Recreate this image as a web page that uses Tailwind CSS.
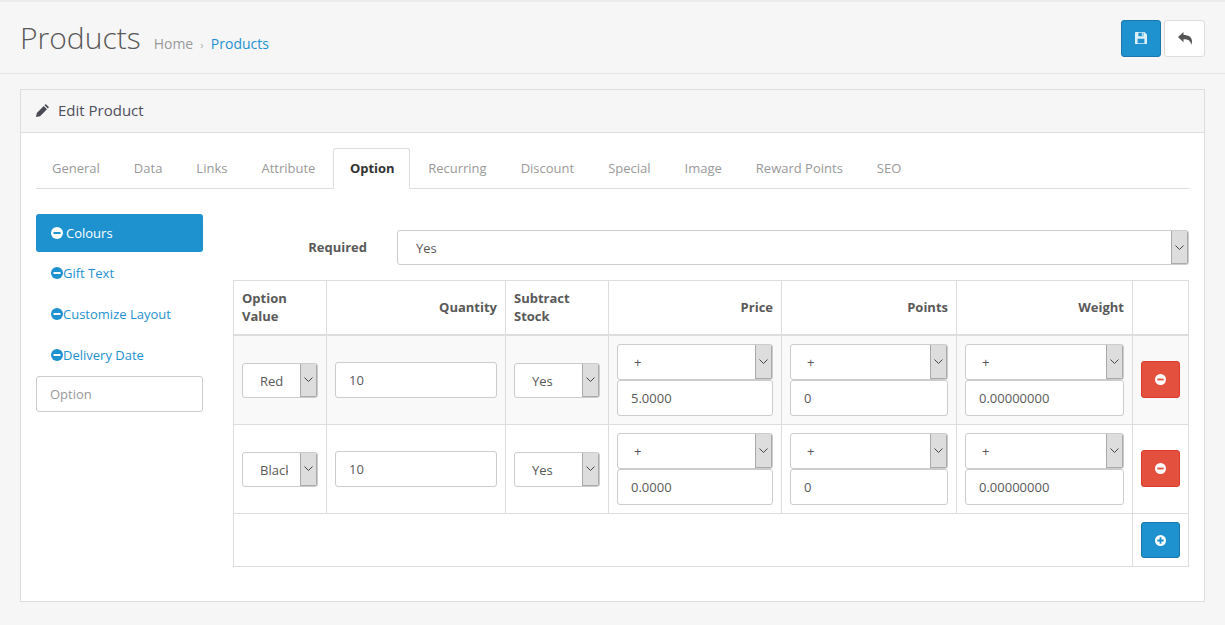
<!DOCTYPE html>
<html lang="en">
<head>
  <meta charset="UTF-8" />
  <title>Products</title>
  <script src="https://cdn.jsdelivr.net/npm/@tailwindcss/browser@4"></script>
</head>
<body class="bg-[#f6f6f6] font-['Open_Sans',sans-serif] text-[13px] leading-[18px] text-[#595959]">
  <div class="border-t-2 border-[#ececec]">
    <!-- page header -->
    <div class="h-[72px] border-b border-[#e3e3e3] flex items-center justify-between pl-5 pr-5">
      <div class="flex items-baseline">
        <h1 class="text-[30px] leading-[36px] font-light text-[#595959]">Products</h1>
        <div class="ml-[13px] text-[14px] text-[#999]">Home <span class="text-[11px] mx-[3.500px] text-[#aaa]">›</span> <a class="text-[#1e91cf]">Products</a></div>
      </div>
      <div class="flex gap-[3px] mt-[1px]">
        <button class="w-10 h-[37px] rounded-[3px] bg-[#1e91cf] border border-[#1978ab] flex items-center justify-center">
          <svg width="12" height="12" viewBox="0 0 14 14"><path fill="#fff" fill-opacity=".85" fill-rule="evenodd" d="M1 0H11L14 3V13a1 1 0 0 1-1 1H1a1 1 0 0 1-1-1V1a1 1 0 0 1 1-1zM4 1V5H10V1zM8 1.500H9.500V4.500H8zM3 8V13H11V8z"/></svg>
        </button>
        <button class="w-[41px] h-[37px] rounded-[3px] bg-white border border-[#ddd] flex items-center justify-center">
          <svg width="14" height="13" viewBox="0 0 14 13"><path fill="#555" d="M0 5L5.500 0V3C10.500 3 14 5 14 9.500C14 11 13.500 12 13 13C13 9 10.500 7.300 5.500 7.300V10.300Z"/></svg>
        </button>
      </div>
    </div>

    <div class="px-5 pt-[15px]">
      <div class="border border-[#ddd] bg-white h-[513px]">
        <div class="h-[43px] pb-[2px] bg-[#f6f6f6] border-b border-[#ddd] flex items-center pl-[15px] text-[15px] text-[#4f4f5c]">
          <svg class="mr-[9px]" width="13" height="13" viewBox="0 0 16 16"><path fill="#4a4a55" d="M12 0L16 4L14.500 5.500L10.500 1.500zM9.500 2.500L13.500 6.500L5 15L0 16L1 11z"/></svg>
          Edit Product
        </div>
        <div class="px-[15px] pt-[15px]">
          <!-- tabs -->
          <div class="flex h-[41px] border-b border-[#ddd] text-[#999] gap-[2px]">
            <a class="px-4 pt-[11px]">General</a>
            <a class="px-4 pt-[11px]">Data</a>
            <a class="px-4 pt-[11px]">Links</a>
            <a class="px-4 pt-[11px]">Attribute</a>
            <a class="pl-[15.500px] pr-[14.500px] pt-[10px] h-[41px] bg-white border border-[#ddd] border-b-white rounded-t-[3px] font-bold text-[#333]">Option</a>
            <a class="px-4 pt-[11px]">Recurring</a>
            <a class="px-4 pt-[11px]">Discount</a>
            <a class="px-4 pt-[11px]">Special</a>
            <a class="px-4 pt-[11px]">Image</a>
            <a class="px-4 pt-[11px]">Reward Points</a>
            <a class="px-4 pt-[11px]">SEO</a>
          </div>

          <div class="flex mt-[25px]">
            <!-- option list -->
            <div class="w-[167px] mr-[30px] shrink-0">
              <div class="h-[38px] rounded-[3px] bg-[#1e91cf] text-white flex items-center pl-[15px]">
                <svg class="mr-[3px]" width="12" height="12" viewBox="0 0 12 12"><circle cx="6" cy="6" r="6" fill="#fff"/><rect x="2.500" y="5" width="7" height="2" fill="#1e91cf"/></svg>
                Colours
              </div>
              <div class="h-[41px] text-[#1e91cf] flex items-center pl-[15px]">
                <svg width="12" height="12" viewBox="0 0 12 12"><circle cx="6" cy="6" r="6" fill="#1e91cf"/><rect x="2.500" y="5" width="7" height="2" fill="#fff"/></svg>
                Gift Text
              </div>
              <div class="h-[41px] text-[#1e91cf] flex items-center pl-[15px]">
                <svg width="12" height="12" viewBox="0 0 12 12"><circle cx="6" cy="6" r="6" fill="#1e91cf"/><rect x="2.500" y="5" width="7" height="2" fill="#fff"/></svg>
                Customize Layout
              </div>
              <div class="h-[41px] text-[#1e91cf] flex items-center pl-[15px]">
                <svg width="12" height="12" viewBox="0 0 12 12"><circle cx="6" cy="6" r="6" fill="#1e91cf"/><rect x="2.500" y="5" width="7" height="2" fill="#fff"/></svg>
                Delivery Date
              </div>
              <div class="h-[36px] mt-[1px] border border-[#ccc] rounded-[3px] flex items-center pl-[13px] text-[#999]">Option</div>
            </div>

            <!-- option detail -->
            <div class="w-[956px] pt-[16px]">
              <div class="flex items-center h-[35px] mb-[15px]">
                <label class="w-[134px] text-right font-bold mb-[2px]">Required</label>
                <div class="ml-[30px] flex-1 h-[35px] border border-[#ccc] rounded-[3px] flex items-center justify-between pl-[18px] overflow-hidden">
                  Yes
                  <span class="w-[17px] h-full bg-[#ddd] border-l border-r border-b border-[#aaa] flex items-center justify-center">
                    <svg width="9" height="5" viewBox="0 0 9 5"><path d="M.5.500L4.500 4.500L8.500.500" fill="none" stroke="#444"/></svg>
                  </span>
                </div>
              </div>

              <table class="w-[955px] table-fixed border-collapse border border-[#ddd]">
                <colgroup>
                  <col class="w-[93px]" /><col class="w-[179px]" /><col class="w-[103px]" /><col class="w-[173px]" /><col class="w-[175px]" /><col class="w-[176px]" /><col class="w-[56px]" />
                </colgroup>
                <thead>
                  <tr class="font-bold">
                    <th class="border border-b-2 border-[#ddd] p-2 pb-[9px] text-left">Option Value</th>
                    <th class="border border-b-2 border-[#ddd] p-2 pb-[9px] text-right">Quantity</th>
                    <th class="border border-b-2 border-[#ddd] p-2 pb-[9px] text-left">Subtract Stock</th>
                    <th class="border border-b-2 border-[#ddd] p-2 pb-[9px] text-right">Price</th>
                    <th class="border border-b-2 border-[#ddd] p-2 pb-[9px] text-right">Points</th>
                    <th class="border border-b-2 border-[#ddd] p-2 pb-[9px] text-right">Weight</th>
                    <th class="border border-b-2 border-[#ddd] p-2 pb-[9px]"></th>
                  </tr>
                </thead>
                <tbody>
                  <tr class="bg-[#f9f9f9]">
                    <td class="border border-[#ddd] p-2">
                      <div class="h-[35px] bg-white border border-[#ccc] rounded-[3px] flex items-center justify-between pl-[17px] overflow-hidden"><span class="relative top-[1px]">Red</span>
                        <span class="w-[17px] shrink-0 h-full bg-[#ddd] border-l border-r border-b border-[#aaa] flex items-center justify-center"><svg width="9" height="5" viewBox="0 0 9 5"><path d="M.5.500L4.500 4.500L8.500.500" fill="none" stroke="#444"/></svg></span></div>
                    </td>
                    <td class="border border-[#ddd] p-2"><div class="h-[36px] bg-white border border-[#ccc] rounded-[3px] flex items-center pl-[13px]">10</div></td>
                    <td class="border border-[#ddd] p-2">
                      <div class="h-[35px] bg-white border border-[#ccc] rounded-[3px] flex items-center justify-between pl-[17px] overflow-hidden"><span class="relative top-[1px]">Yes</span>
                        <span class="w-[17px] shrink-0 h-full bg-[#ddd] border-l border-r border-b border-[#aaa] flex items-center justify-center"><svg width="9" height="5" viewBox="0 0 9 5"><path d="M.5.500L4.500 4.500L8.500.500" fill="none" stroke="#444"/></svg></span></div>
                    </td>
                    <td class="border border-[#ddd] p-2">
                      <div class="h-[36px] bg-white border border-[#ccc] rounded-[3px] flex items-center justify-between pl-[16px] overflow-hidden">+
                        <span class="w-[17px] shrink-0 h-full bg-[#ddd] border-l border-r border-b border-[#aaa] flex items-center justify-center"><svg width="9" height="5" viewBox="0 0 9 5"><path d="M.5.500L4.500 4.500L8.500.500" fill="none" stroke="#444"/></svg></span></div>
                      <div class="h-[36px] bg-white border border-[#ccc] rounded-[3px] flex items-center pl-[13px]">5.0000</div>
                    </td>
                    <td class="border border-[#ddd] p-2">
                      <div class="h-[36px] bg-white border border-[#ccc] rounded-[3px] flex items-center justify-between pl-[16px] overflow-hidden">+
                        <span class="w-[17px] shrink-0 h-full bg-[#ddd] border-l border-r border-b border-[#aaa] flex items-center justify-center"><svg width="9" height="5" viewBox="0 0 9 5"><path d="M.5.500L4.500 4.500L8.500.500" fill="none" stroke="#444"/></svg></span></div>
                      <div class="h-[36px] bg-white border border-[#ccc] rounded-[3px] flex items-center pl-[13px]">0</div>
                    </td>
                    <td class="border border-[#ddd] p-2">
                      <div class="h-[36px] bg-white border border-[#ccc] rounded-[3px] flex items-center justify-between pl-[16px] overflow-hidden">+
                        <span class="w-[17px] shrink-0 h-full bg-[#ddd] border-l border-r border-b border-[#aaa] flex items-center justify-center"><svg width="9" height="5" viewBox="0 0 9 5"><path d="M.5.500L4.500 4.500L8.500.500" fill="none" stroke="#444"/></svg></span></div>
                      <div class="h-[36px] bg-white border border-[#ccc] rounded-[3px] flex items-center pl-[13px]">0.00000000</div>
                    </td>
                    <td class="border border-[#ddd] p-2">
                      <button class="w-[39px] h-[37px] mb-[2px] rounded-[3px] bg-[#e3503e] border border-[#e0392a] flex items-center justify-center">
                        <svg width="11" height="11" viewBox="0 0 12 12"><circle cx="6" cy="6" r="6" fill="#fff"/><rect x="2.500" y="5" width="7" height="2" fill="#e3503e"/></svg>
                      </button>
                    </td>
                  </tr>
                  <tr>
                    <td class="border border-[#ddd] p-2">
                      <div class="h-[35px] bg-white border border-[#ccc] rounded-[3px] flex items-center justify-between pl-[17px] overflow-hidden"><span class="w-[28px] relative top-[1px] overflow-hidden whitespace-nowrap">Black</span>
                        <span class="w-[17px] shrink-0 h-full bg-[#ddd] border-l border-r border-b border-[#aaa] flex items-center justify-center"><svg width="9" height="5" viewBox="0 0 9 5"><path d="M.5.500L4.500 4.500L8.500.500" fill="none" stroke="#444"/></svg></span></div>
                    </td>
                    <td class="border border-[#ddd] p-2"><div class="h-[36px] bg-white border border-[#ccc] rounded-[3px] flex items-center pl-[13px]">10</div></td>
                    <td class="border border-[#ddd] p-2">
                      <div class="h-[35px] bg-white border border-[#ccc] rounded-[3px] flex items-center justify-between pl-[17px] overflow-hidden"><span class="relative top-[1px]">Yes</span>
                        <span class="w-[17px] shrink-0 h-full bg-[#ddd] border-l border-r border-b border-[#aaa] flex items-center justify-center"><svg width="9" height="5" viewBox="0 0 9 5"><path d="M.5.500L4.500 4.500L8.500.500" fill="none" stroke="#444"/></svg></span></div>
                    </td>
                    <td class="border border-[#ddd] p-2">
                      <div class="h-[36px] bg-white border border-[#ccc] rounded-[3px] flex items-center justify-between pl-[16px] overflow-hidden">+
                        <span class="w-[17px] shrink-0 h-full bg-[#ddd] border-l border-r border-b border-[#aaa] flex items-center justify-center"><svg width="9" height="5" viewBox="0 0 9 5"><path d="M.5.500L4.500 4.500L8.500.500" fill="none" stroke="#444"/></svg></span></div>
                      <div class="h-[36px] bg-white border border-[#ccc] rounded-[3px] flex items-center pl-[13px]">0.0000</div>
                    </td>
                    <td class="border border-[#ddd] p-2">
                      <div class="h-[36px] bg-white border border-[#ccc] rounded-[3px] flex items-center justify-between pl-[16px] overflow-hidden">+
                        <span class="w-[17px] shrink-0 h-full bg-[#ddd] border-l border-r border-b border-[#aaa] flex items-center justify-center"><svg width="9" height="5" viewBox="0 0 9 5"><path d="M.5.500L4.500 4.500L8.500.500" fill="none" stroke="#444"/></svg></span></div>
                      <div class="h-[36px] bg-white border border-[#ccc] rounded-[3px] flex items-center pl-[13px]">0</div>
                    </td>
                    <td class="border border-[#ddd] p-2">
                      <div class="h-[36px] bg-white border border-[#ccc] rounded-[3px] flex items-center justify-between pl-[16px] overflow-hidden">+
                        <span class="w-[17px] shrink-0 h-full bg-[#ddd] border-l border-r border-b border-[#aaa] flex items-center justify-center"><svg width="9" height="5" viewBox="0 0 9 5"><path d="M.5.500L4.500 4.500L8.500.500" fill="none" stroke="#444"/></svg></span></div>
                      <div class="h-[36px] bg-white border border-[#ccc] rounded-[3px] flex items-center pl-[13px]">0.00000000</div>
                    </td>
                    <td class="border border-[#ddd] p-2">
                      <button class="w-[39px] h-[37px] mb-[2px] rounded-[3px] bg-[#e3503e] border border-[#e0392a] flex items-center justify-center">
                        <svg width="11" height="11" viewBox="0 0 12 12"><circle cx="6" cy="6" r="6" fill="#fff"/><rect x="2.500" y="5" width="7" height="2" fill="#e3503e"/></svg>
                      </button>
                    </td>
                  </tr>
                </tbody>
                <tfoot>
                  <tr>
                    <td colspan="6" class="border border-[#ddd]"></td>
                    <td class="border border-[#ddd] p-2">
                      <button class="w-[39px] h-[36px] rounded-[3px] bg-[#1e91cf] border border-[#1978ab] flex items-center justify-center">
                        <svg width="11" height="11" viewBox="0 0 12 12"><circle cx="6" cy="6" r="6" fill="#fff"/><path d="M2.500 5H5V2.500H7V5H9.500V7H7V9.500H5V7H2.500z" fill="#1e91cf"/></svg>
                      </button>
                    </td>
                  </tr>
                </tfoot>
              </table>
            </div>
          </div>
        </div>
      </div>
    </div>
  </div>
</body>
</html>
